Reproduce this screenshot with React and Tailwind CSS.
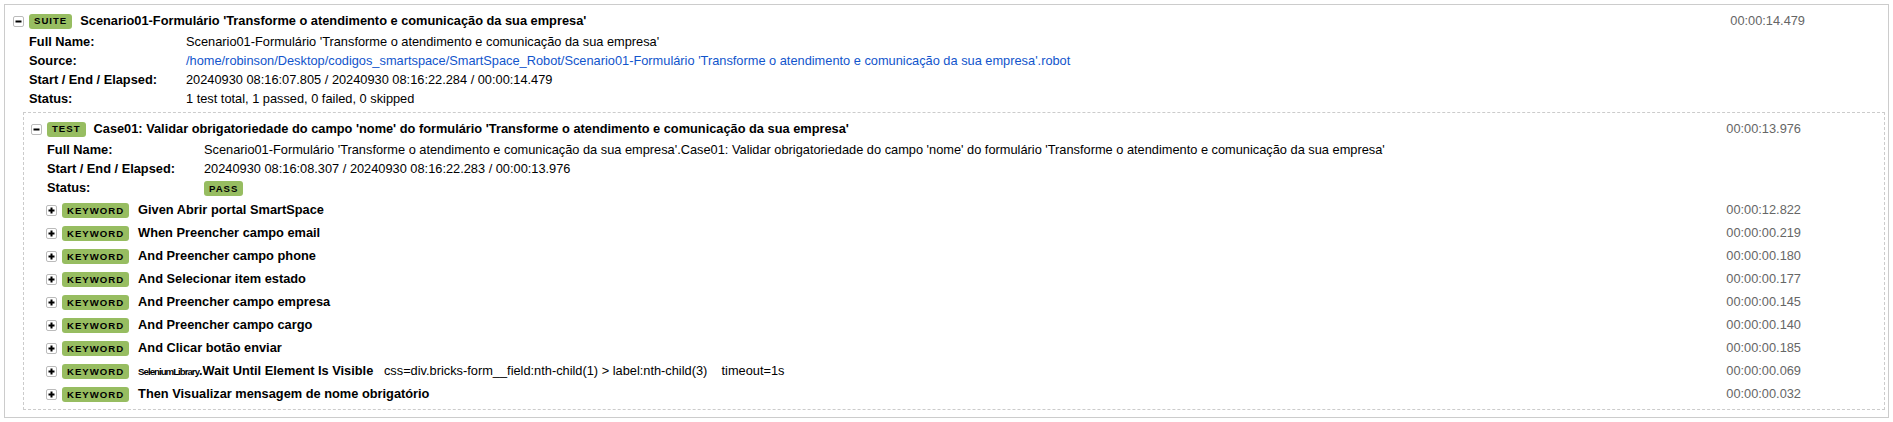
import React from "react";

const keywords = [
  { name: "Given Abrir portal SmartSpace", time: "00:00:12.822" },
  { name: "When Preencher campo email", time: "00:00:00.219" },
  { name: "And Preencher campo phone", time: "00:00:00.180" },
  { name: "And Selecionar item estado", time: "00:00:00.177" },
  { name: "And Preencher campo empresa", time: "00:00:00.145" },
  { name: "And Preencher campo cargo", time: "00:00:00.140" },
  { name: "And Clicar botão enviar", time: "00:00:00.185" },
  {
    parent: "SeleniumLibrary",
    name: "Wait Until Element Is Visible",
    args: ["css=div.bricks-form__field:nth-child(1) > label:nth-child(3)", "timeout=1s"],
    time: "00:00:00.069",
  },
  { name: "Then Visualizar mensagem de nome obrigatório", time: "00:00:00.032" },
];

function Toggle({ open }) {
  return (
    <span className="inline-flex h-[11px] w-[11px] shrink-0 items-center justify-center rounded-[2px] border border-[#bbb] bg-white">
      <svg width="7" height="7" viewBox="0 0 7 7">
        <rect x="0.5" y="2.5" width="6" height="2" fill="#000" />
        {!open && <rect x="2.5" y="0.5" width="2" height="6" fill="#000" />}
      </svg>
    </span>
  );
}

function Label({ children, className = "" }) {
  return (
    <span
      className={`inline-flex h-[15px] shrink-0 items-center rounded-[3px] bg-[#97bd61] px-[5px] text-[9.6px] font-bold tracking-[1px] text-black ${className}`}
    >
      {children}
    </span>
  );
}

function Meta({ label, children }) {
  return (
    <div className="flex h-[19px] items-center">
      <span className="w-[157px] shrink-0 font-bold">{label}</span>
      <span className="whitespace-nowrap">{children}</span>
    </div>
  );
}

export default function App() {
  return (
    <div className="font-['Liberation_Sans',Arial,Helvetica,sans-serif] text-[12.8px] leading-none text-black bg-white">
      <div className="m-[4px] border border-[#ccc]">
        {/* suite header */}
        <div className="mt-[4px] flex h-[24px] items-center pl-[8px]">
          <Toggle open />
          <Label className="ml-[5px]">SUITE</Label>
          <span className="ml-[8px] flex-1 whitespace-nowrap font-bold">
            Scenario01-Formulário 'Transforme o atendimento e comunicação da sua empresa'
          </span>
          <span className="mr-[83px] text-[#666]">00:00:14.479</span>
        </div>
        <div className="pl-[24px]">
          <Meta label="Full Name:">
            Scenario01-Formulário 'Transforme o atendimento e comunicação da sua empresa'
          </Meta>
          <Meta label="Source:">
            <span className="text-[#15c]">
              /home/robinson/Desktop/codigos_smartspace/SmartSpace_Robot/Scenario01-Formulário 'Transforme o atendimento e comunicação da sua empresa'.robot
            </span>
          </Meta>
          <Meta label="Start / End / Elapsed:">
            20240930 08:16:07.805 / 20240930 08:16:22.284 / 00:00:14.479
          </Meta>
          <Meta label="Status:">1 test total, 1 passed, 0 failed, 0 skipped</Meta>
        </div>

        {/* test */}
        <div className="mb-[7px] ml-[18px] mr-[3px] mt-[3px] border border-dashed border-[#ccc] pb-[3px]">
          <div className="mt-[4px] flex h-[24px] items-center pl-[7px]">
            <Toggle open />
            <Label className="ml-[5px]">TEST</Label>
            <span className="ml-[8px] flex-1 whitespace-nowrap font-bold">
              Case01: Validar obrigatoriedade do campo 'nome' do formulário 'Transforme o atendimento e comunicação da sua empresa'
            </span>
            <span className="mr-[83px] text-[#666]">00:00:13.976</span>
          </div>
          <div className="pl-[23px]">
            <Meta label="Full Name:">
              Scenario01-Formulário 'Transforme o atendimento e comunicação da sua empresa'.Case01: Validar obrigatoriedade do campo 'nome' do formulário 'Transforme o atendimento e comunicação da sua empresa'
            </Meta>
            <Meta label="Start / End / Elapsed:">
              20240930 08:16:08.307 / 20240930 08:16:22.283 / 00:00:13.976
            </Meta>
            <Meta label="Status:">
              <Label>PASS</Label>
            </Meta>
          </div>

          <div className="mt-[1px]">
            {keywords.map((k, i) => (
              <div key={i} className="flex h-[23px] items-center pl-[22px]">
                <Toggle />
                <Label className="ml-[5px]">KEYWORD</Label>
                <span className="ml-[9px] flex-1 whitespace-nowrap">
                  {k.parent && (
                    <span className="text-[9.7px] font-bold tracking-[-1px]">{k.parent}</span>
                  )}
                  {k.parent && <span className="font-bold">.</span>}
                  <span className="font-bold">{k.name}</span>
                  {k.args && (
                    <span>
                      {"\u00a0\u00a0\u00a0"}
                      {k.args.join("\u00a0\u00a0\u00a0\u00a0")}
                    </span>
                  )}
                </span>
                <span className="mr-[83px] text-[#666]">{k.time}</span>
              </div>
            ))}
          </div>
        </div>
      </div>
    </div>
  );
}
